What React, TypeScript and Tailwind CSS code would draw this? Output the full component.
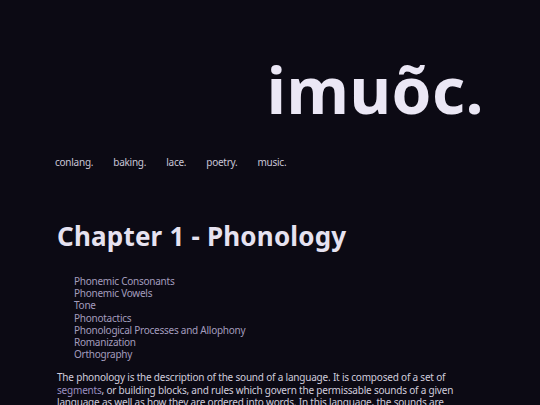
import React from "react";

const sections = [
  "Phonemic Consonants",
  "Phonemic Vowels",
  "Tone",
  "Phonotactics",
  "Phonological Processes and Allophony",
  "Romanization",
  "Orthography",
];

const interests = ["conlang.", "baking.", "lace.", "poetry.", "music."];

export default function App() {
  return (
    <div className="min-h-screen w-full bg-[#0c0a14] text-[#d2cede] overflow-hidden font-['Noto_Sans',sans-serif]">
      {/* header */}
      <header className="px-[57px] pt-[58px]">
        <div className="flex justify-end -mr-[1px]">
          <h1 className="text-[64px] font-bold leading-none tracking-[0.5px] text-[#ebe7f5]">
            imuõc.
          </h1>
        </div>
        <nav className="mt-[33px] -ml-[2px] flex gap-[20px] text-[10px] tracking-[-0.25px] text-[#c9c5d6]">
          {interests.map((i) => (
            <a key={i} href="#">
              {i}
            </a>
          ))}
        </nav>
      </header>

      <main className="px-[57px] pt-[53px]">
        <h2 className="text-[26px] font-bold leading-none tracking-[0.2px] text-[#e6e2f0]">
          Chapter 1 - Phonology
        </h2>

        <ul className="mt-[26px] pl-[17px] text-[10px] leading-[12.2px] tracking-[-0.25px] text-[#a39cbd]">
          {sections.map((s) => (
            <li key={s}>
              <a href="#">{s}</a>
            </li>
          ))}
        </ul>

        <p className="mt-[11px] max-w-[426px] text-[10px] leading-[12.5px] tracking-[-0.2px] text-[#d0ccdc]">
          The phonology is the description of the sound of a language. It is
          composed of a set of{" "}
          <a href="#" className="text-[#9a8fc0]">
            segments
          </a>
          , or building blocks, and rules which govern the permissable sounds of
          a given language as well as how they are ordered into words. In this
          language, the sounds are described below, along with the ways they
          change in context.
        </p>
      </main>
    </div>
  );
}
